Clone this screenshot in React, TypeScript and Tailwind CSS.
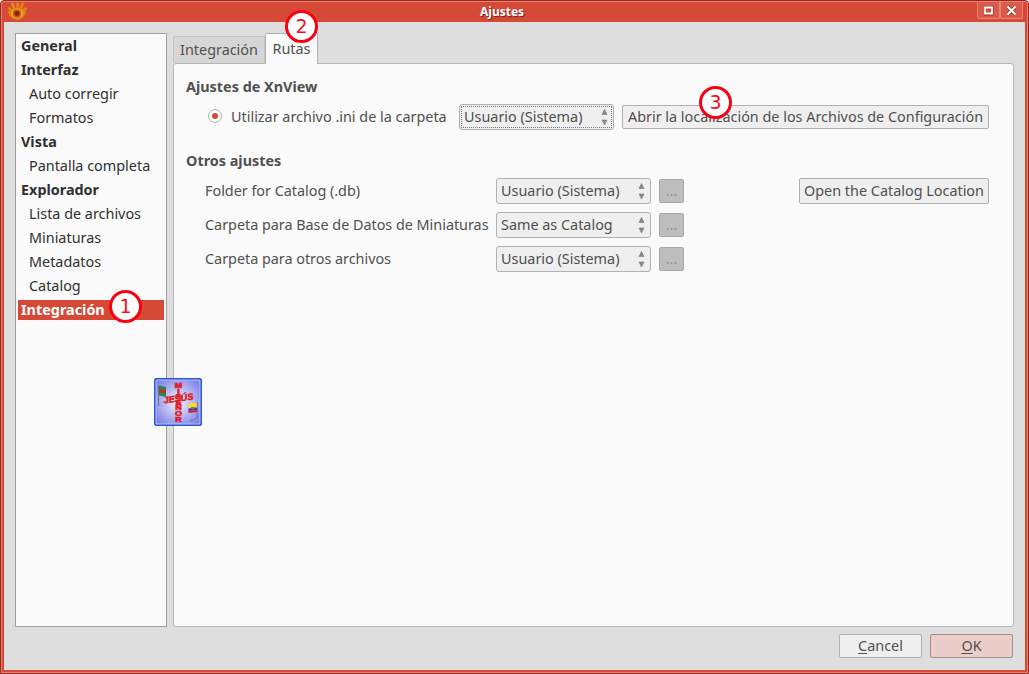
import React from "react";

const nav: [string, boolean][] = [
  ["General", true], ["Interfaz", true], ["Auto corregir", false], ["Formatos", false],
  ["Vista", true], ["Pantalla completa", false], ["Explorador", true], ["Lista de archivos", false],
  ["Miniaturas", false], ["Metadatos", false], ["Catalog", false], ["Integración", true],
];

function Arrows() {
  return (
    <svg className="shrink-0" width="7" height="18" viewBox="0 0 7 18">
      <path d="M3.5 1.5 L6 6.5 H1 Z M1 12 H6 L3.5 17 Z" fill="#8b8b8b" stroke="#777" strokeWidth=".6" />
    </svg>
  );
}

function Combo({ label, focused = false }: { label: string; focused?: boolean }) {
  return (
    <div className="relative flex h-[26px] w-[155px] shrink-0 items-center justify-between rounded-[3px] border border-[#b1b1b1] bg-[#efefef] pr-[5px] pl-1">
      {focused && <div className="absolute inset-[1px] border border-dotted border-[#777]" />}
      <span>{label}</span>
      <Arrows />
    </div>
  );
}

function Button({ children, className = "", tone = "border-[#b1b1b1] bg-[#efefef]" }: { children: React.ReactNode; className?: string; tone?: string }) {
  return (
    <div className={`flex shrink-0 items-center justify-center rounded-[2px] border ${tone} ${className}`}>
      {children}
    </div>
  );
}

function Row({ label, value, action }: { label: string; value: string; action?: string }) {
  return (
    <div className="flex h-[34px] items-center">
      <span className="w-[291px] tracking-[-0.02px]">{label}</span>
      <Combo label={value} />
      <div className="ml-2 flex h-6 w-[25px] items-center justify-center rounded-[2px] border border-[#a8a8a8] bg-[#bdbdbd] text-[#939393]">...</div>
      {action && <Button className="ml-auto h-[26px] w-[190px]">{action}</Button>}
    </div>
  );
}

function Badge({ n, className }: { n: number; className: string }) {
  return (
    <div className={`absolute z-20 flex size-[33px] items-center justify-center rounded-full border-[3px] border-[#f90010] bg-white font-['DejaVu_Sans',sans-serif] text-[19px] leading-none text-[#f01018] ${className}`}>
      {n}
    </div>
  );
}

function Eye() {
  return (
    <svg className="ml-[6px]" width="20" height="20" viewBox="0 0 20 20">
      <g stroke="#e08a14" strokeWidth="2.8" strokeLinecap="round">
        <path d="M6.6 5 L5.6 2 M10.6 4.5 V2 M14.4 5 L15.4 2 M4 8 L2 6.5 M16.5 8 L18.5 6.5" />
      </g>
      <path d="M.8 10 Q4 5.5 10 5.5 Q16 5.5 19.2 10 Q16 18 10 18 Q4 18 .8 10Z" fill="#e08212" />
      <ellipse cx="10" cy="11.5" rx="6" ry="4.8" fill="#f0a52c" />
      <circle cx="10" cy="11.5" r="4" fill="#c8500f" />
      <circle cx="10" cy="11.5" r="2.3" fill="#8a1f0a" />
    </svg>
  );
}

function Emblem() {
  return (
    <svg className="absolute top-[377px] left-[153px]" width="48" height="48" viewBox="0 0 48 48">
      <defs>
        <radialGradient id="glow" r=".65"><stop offset="0" stopColor="#f4f4ff" /><stop offset="1" stopColor="#8080e8" /></radialGradient>
      </defs>
      <rect width="48" height="48" rx="2.5" fill="#2c56d6" />
      <rect x="1.5" y="1.5" width="45" height="45" rx="1.5" fill="#b4c4fa" />
      <rect x="2.5" y="2.5" width="43" height="43" rx="1" fill="url(#glow)" />
      <path d="M4.5 8 V28" stroke="#666" strokeWidth=".8" />
      <path d="M5 7.5 L12 9 V19 L5 17.5Z" fill="#248b43" />
      <path d="M5 10.5 L12 12 V15.5 L5 14Z" fill="#b8303a" />
      <path d="M34.5 25.5 L43 24.5 V29.5 L34.5 30.5Z" fill="#f6df23" />
      <path d="M34.5 30.5 L43 29.5 V32 L34.5 33Z" fill="#243cae" />
      <path d="M34.5 33 L43 32 V34 L34.5 35Z" fill="#d51e2c" />
      <path d="M37 29 H40.5 V31.5 H37Z" fill="#8f6a3c" />
      <path d="M43.3 24 V40 L36 43" stroke="#6868a0" strokeWidth=".8" fill="none" />
      <g fill="#dc1f2b" stroke="#dc1f2b" strokeWidth=".6" fontFamily="Liberation Sans" fontWeight="bold" textAnchor="middle">
        {["M", "I", "S", "E", "Ñ", "O", "R"].map((c, i) => (
          <text key={i} fontSize="6.6" transform={`translate(24.5 ${10 + i * 5.6}) scale(1.35 1)`}>{c}</text>
        ))}
        <text x="24.5" y="23.5" fontSize="9" fontStyle="italic" textLength="30" lengthAdjust="spacingAndGlyphs" transform="rotate(-8 24.5 21)">JESÚS</text>
      </g>
    </svg>
  );
}

export default function App() {
  return (
    <div className="relative flex h-[674px] w-[1029px] flex-col overflow-hidden rounded-t-[4px] border border-[#96281e] bg-[#d64937] font-['Noto_Sans',sans-serif] text-[14.4px] leading-5 whitespace-nowrap text-[#505050] shadow-[inset_0_0_0_1px_#e98475]">
      <div className="flex h-[21px] shrink-0 items-center">
        <Eye />
        <div className="ml-[453px] text-[12px] font-bold text-white [text-shadow:1px_1px_1px_#702018]">Ajustes</div>
        <div className="ml-auto flex self-stretch pt-px pr-[5px]">
          {[0, 1].map((i) => (
            <div key={i} className="flex h-[17px] w-[23px] items-center justify-center rounded-b-[2px] border-x border-b border-[#e98475] bg-[#da5a4a]">
              <svg width="11" height="11" viewBox="0 0 11 11" fill="none">
                {i === 0 ? (
                  <>
                    <path d="M1 1H10.5V10.5H1Z" fill="#8f3024" />
                    <path d="M2 2.5H9V8.5H2Z" stroke="#fff" strokeWidth="1.8" fill="#d64937" />
                  </>
                ) : (
                  <>
                    <path d="M2 2 L9 9 M9 2 L2 9" stroke="#8f3024" strokeWidth="3.6" />
                    <path d="M1.5 1.5 L9.5 9.5 M9.5 1.5 L1.5 9.5" stroke="#fff" strokeWidth="2.1" />
                  </>
                )}
              </svg>
            </div>
          ))}
        </div>
      </div>
      <div className="mx-[3px] mb-[3px] flex flex-1 flex-col bg-[#dedede]">
        <div className="flex h-[605px]">
          <div className="mt-[11px] ml-[11px] h-[594px] w-[152px] border border-[#a0a0a0] bg-[#fafafa] px-[2px] pt-0.5 text-[#303030]">
            {nav.map(([label, bold], i) => (
              <div key={label} className={`mb-1 h-5 ${bold ? "pl-[3px] font-bold" : "pl-[11px]"} ${i === 11 ? "bg-[#d64937] text-white" : ""}`}>{label}</div>
            ))}
          </div>
          <div className="mt-[11px] ml-1.5 flex w-[841px] flex-col">
            <div className="relative z-10 flex h-[31px] items-end">
              <div className="mb-px flex h-[27px] w-[92px] items-center justify-center rounded-tl-[2px] border border-b-0 border-[#c5c5c5] bg-[#d6d6d6]">Integración</div>
              <div className="flex h-[31px] w-[53px] items-center justify-center rounded-t-[2px] border border-b-0 border-[#b1b1b1] bg-[#fafafa]">Rutas</div>
            </div>
            <div className="-mt-px flex-1 rounded-[3px] border border-[#b5b5b5] bg-[#fafafa] pt-[13px] pr-6 pl-3">
              <div className="font-bold">Ajustes de XnView</div>
              <div className="mt-[7px] flex h-[26px] items-center">
                <div className="mb-0.5 ml-[22px] flex size-[14px] items-center justify-center rounded-full border border-[#adadad] bg-white"><div className="size-1.5 rounded-full bg-[#d64937]" /></div>
                <span className="ml-[9px] w-[228px]">Utilizar archivo .ini de la carpeta</span>
                <Combo label="Usuario (Sistema)" focused />
                <Button className="ml-auto h-6 w-[367px]">Abrir la localización de los Archivos de Configuración</Button>
              </div>
              <div className="mt-[21px] mb-[3px] font-bold">Otros ajustes</div>
              <div className="pl-[19px]">
                <Row label="Folder for Catalog (.db)" value="Usuario (Sistema)" action="Open the Catalog Location" />
                <Row label="Carpeta para Base de Datos de Miniaturas" value="Same as Catalog" />
                <Row label="Carpeta para otros archivos" value="Usuario (Sistema)" />
              </div>
            </div>
          </div>
        </div>
        <div className="mt-[7px] mr-3 flex justify-end gap-2">
          <Button className="h-6 w-[83px]"><span><u className="underline-offset-2">C</u>ancel</span></Button>
          <Button className="h-6 w-[83px]" tone="border-[#a58c89] bg-[#ebceca]"><span><u className="underline-offset-2">O</u>K</span></Button>
        </div>
      </div>
      <Emblem />
      <Badge n={1} className="top-[289px] left-[108px]" />
      <Badge n={2} className="top-[9px] left-[284px]" />
      <Badge n={3} className="top-[85px] left-[698px]" />
    </div>
  );
}
